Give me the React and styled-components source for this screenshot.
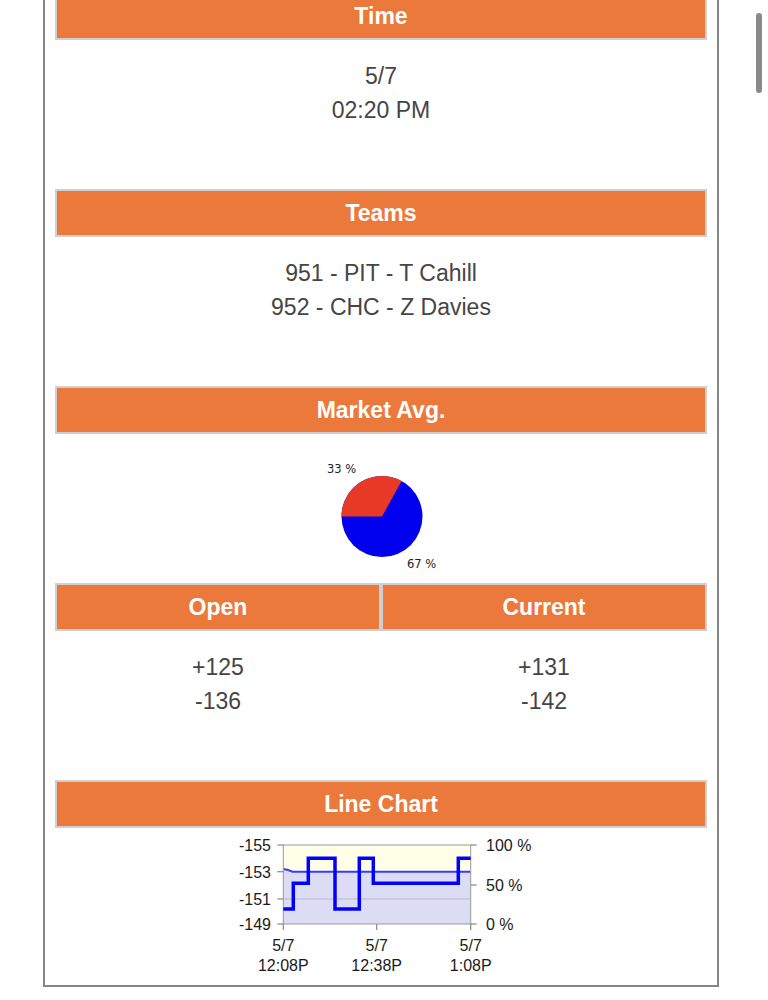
import React from "react";
import styled, { createGlobalStyle } from "styled-components";

const Global = createGlobalStyle`
  html, body { margin: 0; padding: 0; background: #fff; overflow: hidden; }
  body { font-family: "Liberation Sans", Arial, sans-serif; }
`;

const Frame = styled.div`
  box-sizing: border-box;
  width: 676px;
  margin: -10px 0 0 43px;
  border: 2px solid #858585;
  padding: 0 10px;
  background: #fff;
`;

const HeaderRow = styled.div`
  display: grid;
  grid-template-columns: repeat(${(p) => p.$cols || 1}, 1fr);
`;

const HeaderCell = styled.div`
  box-sizing: border-box;
  height: 48px;
  border: 2px solid #cfcfcf;
  background: #ec793c;
  color: #fff;
  font-weight: bold;
  font-size: 23px;
  display: flex;
  align-items: center;
  justify-content: center;
`;

const ValueRow = styled.div`
  display: grid;
  grid-template-columns: repeat(${(p) => p.$cols || 1}, 1fr);
`;

const ValueCell = styled.div`
  box-sizing: border-box;
  height: 149px;
  padding-top: 19px;
  text-align: center;
  color: #454545;
  font-size: 23px;
  line-height: 34px;
`;

const ChartCell = styled.div`
  box-sizing: border-box;
  height: ${(p) => p.$h}px;
  padding-top: ${(p) => p.$pt}px;
  display: flex;
  justify-content: center;
  align-items: flex-start;
`;

const ScrollThumb = styled.div`
  position: fixed;
  left: 756px;
  top: 13px;
  width: 6px;
  height: 80px;
  border-radius: 3px;
  background: #8a8a8a;
`;

function Section({ title, lines }) {
  return (
    <>
      <HeaderRow>
        <HeaderCell>{title}</HeaderCell>
      </HeaderRow>
      <ValueRow>
        <ValueCell>
          {lines.map((l) => (
            <div key={l}>{l}</div>
          ))}
        </ValueCell>
      </ValueRow>
    </>
  );
}

function Pie() {
  const cx = 71, cy = 70.5, r = 40.5;
  const a = (61 * Math.PI) / 180;
  const ex = cx + r * Math.cos(a);
  const ey = cy - r * Math.sin(a);
  return (
    <svg width="140" height="130" viewBox="0 0 140 130">
      <circle cx={cx} cy={cy} r={r} fill="#0000ee" />
      <path
        d={`M ${cx} ${cy} L ${cx - r} ${cy} A ${r} ${r} 0 0 1 ${ex} ${ey} Z`}
        fill="#e63a26"
      />
      <g fontFamily="'DejaVu Sans', sans-serif" fontSize="11.5" fill="#222">
        <text x="16" y="27">33 %</text>
        <text x="96" y="122">67 %</text>
      </g>
    </svg>
  );
}

function LineChart() {
  const L = 57.3, R = 244.7, T = 15, B = 94;
  const step = [
    [57.3, 79], [67.3, 79], [67.3, 53.3], [82.3, 53.3], [82.3, 28.3],
    [109, 28.3], [109, 79], [133.3, 79], [133.3, 28.3], [147.3, 28.3],
    [147.3, 53.3], [232.3, 53.3], [232.3, 28.3], [244.7, 28.3],
  ];
  const leftLabels = [["-155", T], ["-153", 41.7], ["-151", 69], ["-149", B]];
  const rightLabels = [["100 %", T], ["50 %", 55], ["0 %", B]];
  const xTicks = [[L, "12:08P"], [150.7, "12:38P"], [R, "1:08P"]];
  return (
    <svg width="310" height="150" viewBox="0 0 310 150">
      <rect x={L} y={T} width={R - L} height={B - T} fill="#ffffe8" />
      <path
        d={`M ${L} 39 Q ${L + 5} 39.5 ${L + 9} 41.7 L ${R} 41.7 L ${R} ${B} L ${L} ${B} Z`}
        fill="#dcdcf4"
      />
      <line x1={L} x2={R} y1={69} y2={69} stroke="#b9b9d2" strokeWidth="1" />
      <path
        d={`M ${L} 39 Q ${L + 5} 39.5 ${L + 9} 41.7 L ${R} 41.7`}
        fill="none"
        stroke="#3a3aff"
        strokeWidth="2"
      />
      <rect x={L} y={T} width={R - L} height={B - T} fill="none" stroke="#9a9a9a" strokeWidth="1" />
      <g stroke="#8a8a8a" strokeWidth="1.2">
        {leftLabels.map(([, y]) => (
          <line key={y} x1={L - 6} x2={L} y1={y} y2={y} />
        ))}
        {rightLabels.map(([, y]) => (
          <line key={y} x1={R} x2={R + 6} y1={y} y2={y} />
        ))}
        {xTicks.map(([x]) => (
          <line key={x} x1={x} x2={x} y1={B} y2={B + 6} />
        ))}
      </g>
      <polyline
        points={step.map((p) => p.join(",")).join(" ")}
        fill="none"
        stroke="#0000ff"
        strokeWidth="3.5"
        strokeLinejoin="miter"
      />
      <g fontFamily="'Liberation Sans', Arial, sans-serif" fontSize="16" fill="#1a1a1a">
        {leftLabels.map(([t, y]) => (
          <text key={t} x="45" y={y + 6} textAnchor="end">{t}</text>
        ))}
        {rightLabels.map(([t, y]) => (
          <text key={t} x="260" y={y + 6}>{t}</text>
        ))}
        {xTicks.map(([x, t]) => (
          <g key={t}>
            <text x={x} y="121" textAnchor="middle">5/7</text>
            <text x={x} y="141" textAnchor="middle">{t}</text>
          </g>
        ))}
      </g>
    </svg>
  );
}

export default function App() {
  return (
    <>
      <Global />
      <Frame>
        <Section title="Time" lines={["5/7", "02:20 PM"]} />
        <Section title="Teams" lines={["951 - PIT - T Cahill", "952 - CHC - Z Davies"]} />
        <HeaderRow>
          <HeaderCell>Market Avg.</HeaderCell>
        </HeaderRow>
        <ChartCell $h={149} $pt={12}>
          <Pie />
        </ChartCell>
        <HeaderRow $cols={2}>
          <HeaderCell>Open</HeaderCell>
          <HeaderCell>Current</HeaderCell>
        </HeaderRow>
        <ValueRow $cols={2}>
          <ValueCell>
            <div>+125</div>
            <div>-136</div>
          </ValueCell>
          <ValueCell>
            <div>+131</div>
            <div>-142</div>
          </ValueCell>
        </ValueRow>
        <HeaderRow>
          <HeaderCell>Line Chart</HeaderCell>
        </HeaderRow>
        <ChartCell $h={157} $pt={2}>
          <LineChart />
        </ChartCell>
      </Frame>
      <ScrollThumb />
    </>
  );
}
